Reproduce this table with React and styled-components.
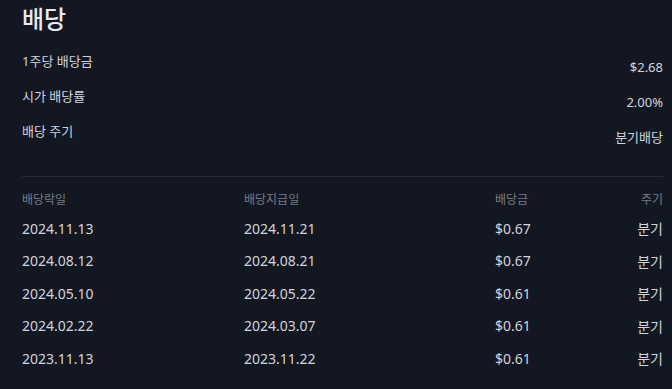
import React from "react";
import styled, { createGlobalStyle } from "styled-components";

const Global = createGlobalStyle`
  html, body { margin: 0; padding: 0; background: #131722; }
  body { font-family: "Noto Sans", "Noto Sans CJK KR", sans-serif; color: #d1d4dc; }
`;

const Page = styled.div`
  width: 672px;
  height: 389px;
  box-sizing: border-box;
  padding: 2px 9px 0 22px;
  background: #131722;
  overflow: hidden;
`;

const Title = styled.h2`
  margin: 0;
  font-size: 24px;
  font-weight: 500;
  line-height: 34px;
  color: #e8eaf0;
`;

const Summary = styled.div`
  display: flex;
  flex-direction: column;
  gap: 13px;
  margin-top: 17px;
  padding-bottom: 31px;
  border-bottom: 1px solid #262a35;
`;

const SummaryRow = styled.div`
  display: flex;
  justify-content: space-between;
  align-items: flex-start;
  height: 22px;
`;

const Label = styled.span`
  font-size: 13px;
  line-height: 16px;
  color: #d1d4dc;
`;

const Value = styled.span`
  font-size: 13px;
  line-height: 16px;
  margin-top: 6px;
  color: #d1d4dc;
`;

const Table = styled.div`
  display: grid;
  grid-template-columns: 222px 251px 1fr auto;
  margin-top: 13px;
`;

const Cell = styled.div`
  height: ${(p) => (p.$head ? "18px" : "32.5px")};
  display: flex;
  align-items: center;
  justify-content: ${(p) => (p.$right ? "flex-end" : "flex-start")};
  font-size: ${(p) => (p.$head ? "12px" : "14px")};
  color: ${(p) => (p.$head ? "#787b86" : "#d1d4dc")};
  margin-bottom: ${(p) => (p.$head ? "4px" : "0")};
`;

const summary = [
  ["1주당 배당금", "$2.68"],
  ["시가 배당률", "2.00%"],
  ["배당 주기", "분기배당"],
];

const rows = [
  ["2024.11.13", "2024.11.21", "$0.67", "분기"],
  ["2024.08.12", "2024.08.21", "$0.67", "분기"],
  ["2024.05.10", "2024.05.22", "$0.61", "분기"],
  ["2024.02.22", "2024.03.07", "$0.61", "분기"],
  ["2023.11.13", "2023.11.22", "$0.61", "분기"],
];

export default function App() {
  return (
    <>
      <Global />
      <Page>
        <Title>배당</Title>
        <Summary>
          {summary.map(([l, v]) => (
            <SummaryRow key={l}>
              <Label>{l}</Label>
              <Value>{v}</Value>
            </SummaryRow>
          ))}
        </Summary>
        <Table>
          <Cell $head>배당락일</Cell>
          <Cell $head>배당지급일</Cell>
          <Cell $head>배당금</Cell>
          <Cell $head $right>주기</Cell>
          {rows.map((r) => (
            <React.Fragment key={r[0]}>
              <Cell>{r[0]}</Cell>
              <Cell>{r[1]}</Cell>
              <Cell>{r[2]}</Cell>
              <Cell $right>{r[3]}</Cell>
            </React.Fragment>
          ))}
        </Table>
      </Page>
    </>
  );
}
